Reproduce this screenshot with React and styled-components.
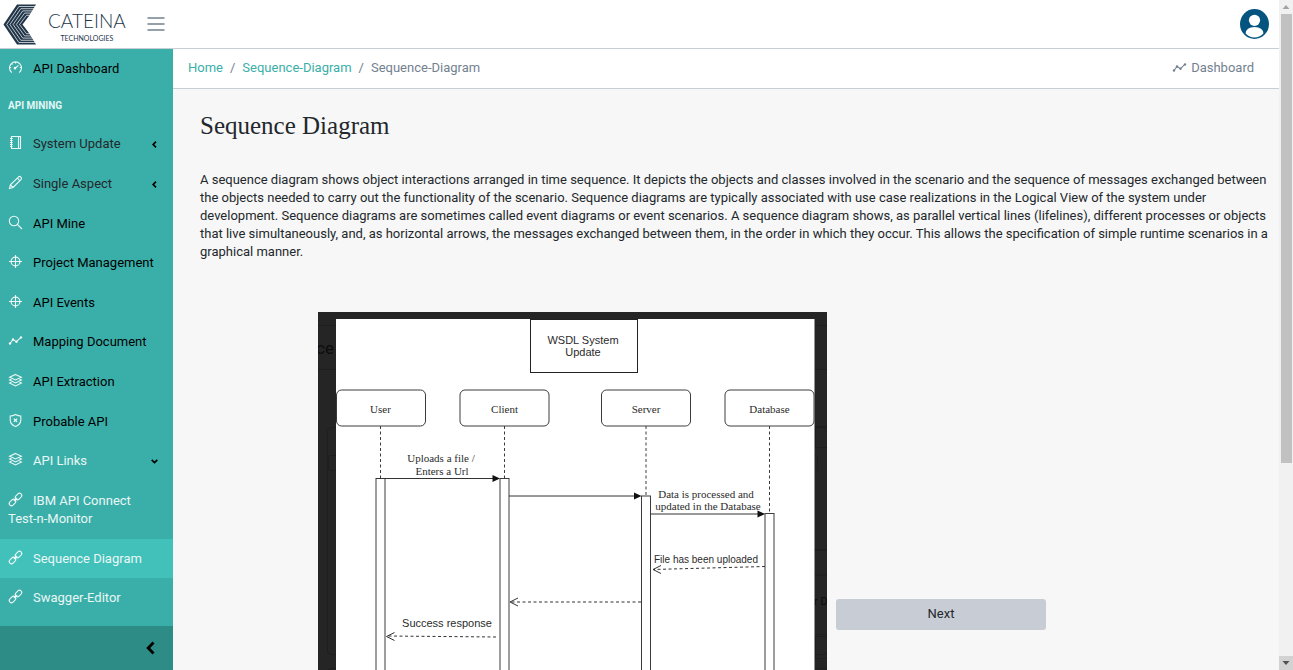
import React from "react";
import styled, { createGlobalStyle } from "styled-components";

const teal = "#3aafa9";
const line = "#c8ced3";
const muted = "#73818f";
const ink = "#23282c";

const GlobalStyle = createGlobalStyle`
  *, *::before, *::after { box-sizing: border-box; }
  html, body, #root { height: 100%; }
  body {
    margin: 0;
    overflow: hidden;
    background: #f7f7f7;
    color: ${ink};
    font-family: Roboto, "Liberation Sans", sans-serif;
    font-size: 13px;
    line-height: 18px;
  }
  a { text-decoration: none; }
  button { font: inherit; border: 0; cursor: pointer; }
`;

const Window = styled.div`
  display: flex;
  height: 100vh;
`;

const Page = styled.div`
  flex: 1;
  min-width: 0;
  display: flex;
  flex-direction: column;
`;

const Header = styled.header`
  flex: none;
  display: flex;
  align-items: center;
  height: 49px;
  padding: 0 10px 0 3px;
  background: #fff;
  border-bottom: 1px solid ${line};
`;

const Brand = styled.a`
  display: flex;
  align-items: center;
  gap: 11px;
  color: #22364a;
`;

const BrandText = styled.span`
  display: flex;
  flex-direction: column;
  align-items: center;
  font-family: Lato, sans-serif;
  padding-top: 8px;
`;

const BrandName = styled.span`
  font-size: 19px;
  font-weight: 300;
  line-height: 20px;
`;

const BrandSub = styled.span`
  font-size: 7px;
  line-height: 14px;
`;

const MenuButton = styled.button`
  display: flex;
  margin-left: 21px;
  margin-right: auto;
  padding: 0;
  background: none;
  color: ${muted};
`;

const AvatarButton = styled.button`
  display: flex;
  padding: 0;
  background: none;
`;

const Body = styled.div`
  flex: 1;
  min-height: 0;
  display: flex;
`;

const Sidebar = styled.aside`
  flex: none;
  width: 173px;
  display: flex;
  flex-direction: column;
  background: ${teal};
`;

const NavList = styled.ul`
  flex: 1;
  min-height: 0;
  display: flex;
  flex-direction: column;
  margin: 0;
  padding: 0 0 8px;
  list-style: none;
`;

const NavTitle = styled.li`
  flex: none;
  height: 36px;
  padding: 8px;
  color: #e4f6f5;
  font-size: 10px;
  font-weight: 700;
`;

const NavItem = styled.li`
  flex: 1 0 auto;
  display: flex;
`;

const NavLink = styled.a`
  flex: 1;
  display: flex;
  align-items: center;
  padding: 10px 15px 10px 8px;
  color: ${(p) => (p.$tone === "light" ? "#e9f7f6" : p.$tone === "soft" ? ink : "#000")};
  background: ${(p) => (p.$active ? "#42c1ba" : "transparent")};
`;

const NavLabel = styled.span`
  flex: 1;
  svg {
    margin: 0 10px 0 0;
    vertical-align: -2px;
    color: rgba(255, 255, 255, 0.9);
  }
`;

const Minimizer = styled.button`
  flex: none;
  display: flex;
  align-items: center;
  justify-content: flex-end;
  height: 44px;
  padding: 0 18px;
  background: #2e8c87;
  color: #000;
`;

const Main = styled.main`
  flex: 1;
  min-width: 0;
  overflow: hidden;
`;

const CrumbBar = styled.div`
  display: flex;
  align-items: center;
  justify-content: space-between;
  height: 40px;
  padding: 0 25px 2px 15px;
  background: #fff;
  border-bottom: 1px solid ${line};
`;

const Crumbs = styled.ol`
  display: flex;
  gap: 7px;
  margin: 0;
  padding: 0;
  list-style: none;
  color: ${muted};
  a { color: ${teal}; }
  li + li::before { content: "/"; padding-right: 7px; }
`;

const CrumbAction = styled.a`
  display: flex;
  align-items: center;
  gap: 4px;
  color: ${muted};
`;

const Content = styled.section`
  padding: 21px 8px 0 27px;
`;

const Title = styled.h1`
  margin: 0;
  font-family: "Liberation Serif", serif;
  font-size: 25px;
  font-weight: 400;
  line-height: 32px;
`;

const Lead = styled.p`
  margin: 29px 0 0;
`;

const Exhibit = styled.div`
  display: flex;
  align-items: flex-start;
  gap: 9px;
  margin: 51px 0 0 118px;
`;

const DiagramArt = styled.svg`
  display: block;
  flex: none;
`;

const NextButton = styled.button`
  width: 210px;
  height: 31px;
  margin-top: 287px;
  padding: 0 0 2px;
  border-radius: 3px;
  background: #c8ccd4;
  color: ${ink};
`;

const ScrollTrack = styled.div`
  flex: none;
  width: 14px;
  display: flex;
  flex-direction: column;
  background: #f1f1f1;
`;

const ScrollStep = styled.button`
  flex: none;
  display: flex;
  height: 14px;
  padding: 0;
  background: ${(p) => (p.$enabled ? "#d2d2d2" : "transparent")};
  color: ${(p) => (p.$enabled ? "#505050" : "#a3a3a3")};
`;

const ScrollLane = styled.div`
  flex: 1;
  padding: 0 1px 0 2px;
`;

const ScrollThumb = styled.div`
  height: 70%;
  background: #c1c1c1;
`;

const Glyph = ({ children }) => (
  <svg width="15" height="15" viewBox="0 0 15 15" fill="none" stroke="currentColor" strokeWidth="1.1" aria-hidden="true">
    {children}
  </svg>
);

const Gauge = () => (
  <Glyph>
    <path d="M3.8 12.6A6 6 0 1 1 11.2 12.6" />
    <path d="M7 8.4 10.4 5.4M7.5 2v1.4M2 7.5h1.2M11.8 7.5H13M3.6 3.9l.8.8" />
    <circle cx="7" cy="8.2" r=".8" fill="currentColor" />
  </Glyph>
);
const Notebook = () => (
  <Glyph>
    <path d="M3.5 1.5h9v12h-9zM10.5 1.5v12" />
    <path d="M2 3.5h2.6M2 5.5h2.6M2 7.5h2.6M2 9.5h2.6M2 11.5h2.6" />
  </Glyph>
);
const Pencil = () => (
  <Glyph>
    <path d="M1.5 13.5 2.4 9.9 10.6 1.8Q11.6 1 12.6 2L13 2.4Q14 3.4 13.2 4.4L5 12.5ZM9.4 3.2l2.6 2.6M2.4 9.9 5 12.5" />
  </Glyph>
);
const Magnifier = () => (
  <Glyph>
    <circle cx="6" cy="6" r="4.7" />
    <path d="M9.4 9.4 14 14" />
  </Glyph>
);
const Target = () => (
  <Glyph>
    <circle cx="7.5" cy="7.5" r="4.4" />
    <path d="M7.5 1v13M1 7.5h13" />
  </Glyph>
);
const Graph = () => (
  <Glyph>
    <path d="M2 10.5 5 6.5 8.4 8.6 13 4.4" />
    <g fill="currentColor" stroke="none">
      <circle cx="2" cy="10.5" r="1.2" />
      <circle cx="5" cy="6.5" r="1.2" />
      <circle cx="8.5" cy="8.7" r="1.2" />
      <circle cx="13" cy="4.4" r="1.2" />
    </g>
  </Glyph>
);
const Layers = () => (
  <Glyph>
    <path d="M7.5 1.4 13.4 4.2 7.5 7 1.6 4.2Z" />
    <path d="M3.4 6.2 1.6 7.1 7.5 9.9 13.4 7.1 11.6 6.2" />
    <path d="M3.4 9.2 1.6 10.1 7.5 13 13.4 10.1 11.6 9.2" />
  </Glyph>
);
const Shield = () => (
  <Glyph>
    <path d="M7.5 1.5Q10 3 12.8 3V7.4Q12.4 11.6 7.5 13.6 2.6 11.6 2.2 7.4V3Q5 3 7.5 1.5Z" />
    <path d="M5.9 5.6 9.1 8.8M9.1 5.6 5.9 8.8" strokeWidth="1.3" />
  </Glyph>
);
const Chain = () => (
  <Glyph>
    <rect x="-3.6" y="-2.2" width="7.2" height="4.400" rx="2.200" transform="translate(10.5 4.5) rotate(-45)" />
    <rect x="-3.6" y="-2.2" width="7.2" height="4.400" rx="2.200" transform="translate(4.5 10.5) rotate(-45)" />
    <path d="M5.8 9.2 9.2 5.8" />
  </Glyph>
);

const Caret = ({ open }) => (
  <svg width="7" height="7" viewBox="0 0 7 7" fill="none" stroke="#000" strokeWidth="1.700" aria-hidden="true">
    <path d={open ? "M.7 1.8 3.5 4.6 6.3 1.8" : "M5 .7 2.2 3.5 5 6.3"} />
  </svg>
);

const stripes = [1, 2, 3, 4, 5];

const Logo = () => (
  <svg width="34" height="41" viewBox="0 0 34 41" aria-hidden="true">
    <path d="M14 .5H33L26 12 19.5 20.5 26 29 33 40.5H14L.5 20.5Z" fill="#22364a" />
    <g fill="none" stroke="#fff" strokeWidth=".7">
      {stripes.map((i) => (
        <path key={i} d={`M34 ${i * 2.2 + 0.3}H${14 + i * 1.9}L${0.5 + i * 3.2} 20.5 ${14 + i * 1.9} ${40.7 - i * 2.2}H34`} />
      ))}
    </g>
  </svg>
);

const Avatar = () => (
  <svg width="29" height="30" viewBox="0 0 29 30" aria-hidden="true">
    <ellipse cx="14.5" cy="15" rx="14.5" ry="15" fill="#05547f" />
    <circle cx="14.5" cy="11.3" r="5.6" fill="#fff" />
    <path d="M5.6 24.6Q6 18 14.5 18T23.4 24.6Q19.6 28.5 14.5 28.5T5.6 24.6Z" fill="#fff" />
  </svg>
);

const links = [
  { label: "System Update", Icon: Notebook, tone: "soft", caret: "closed" },
  { label: "Single Aspect", Icon: Pencil, tone: "soft", caret: "closed" },
  { label: "API Mine", Icon: Magnifier },
  { label: "Project Management", Icon: Target },
  { label: "API Events", Icon: Target },
  { label: "Mapping Document", Icon: Graph },
  { label: "API Extraction", Icon: Layers },
  { label: "Probable API", Icon: Shield },
  { label: "API Links", Icon: Layers, tone: "light", caret: "open" },
  { label: "IBM API Connect Test-n-Monitor", Icon: Chain, tone: "light" },
  { label: "Sequence Diagram", Icon: Chain, tone: "light", active: true },
  { label: "Swagger-Editor", Icon: Chain, tone: "light" },
];

const SideLink = ({ label, Icon, tone, caret, active }) => (
  <NavItem>
    <NavLink href="#" $tone={tone} $active={active}>
      <NavLabel>
        <Icon />
        {label}
      </NavLabel>
      {caret && <Caret open={caret === "open"} />}
    </NavLink>
  </NavItem>
);

const actors = [
  { name: "User", x: 18.5, life: 62.5, start: 166.5 },
  { name: "Client", x: 142, life: 186.5, start: 166.5 },
  { name: "Server", x: 283.5, life: 328, start: 184 },
  { name: "Database", x: 407, life: 451.5, start: 201.5 },
];

const Diagram = () => (
  <DiagramArt width="509" height="620" viewBox="0 0 509 620" role="img" aria-label="WSDL System Update sequence diagram">
    <rect width="509" height="620" fill="#252525" />
    <g fill="none" stroke="#1e1e1e">
      <path d="M0 13.5H509M0 57.5H509" />
      <rect x="9.5" y="115.5" width="500" height="227" rx="4" />
      <rect x="10.5" y="143.5" width="489" height="15" rx="2" />
      <rect x="497.5" y="114.5" width="20" height="21" />
      <path d="M496 263H509M496 322.5H509" />
      <rect x="497.5" y="324.5" width="20" height="22" />
      <rect x="9.5" y="356.5" width="500" height="250" rx="4" />
      <path d="M496 238h13" strokeWidth="2" />
    </g>
    <g fill="#0c0c0c" fontFamily="Roboto, sans-serif">
      <text x="-2" y="42" fontSize="17">ce</text>
      <text x="496" y="293" fontSize="11">r D</text>
    </g>
    <rect x="18" y="7" width="478.5" height="613" fill="#fff" />
    <g fill="#fff" stroke="#3c3c3c">
      <rect x="212.5" y="7.5" width="107" height="53" stroke="#222" />
      {actors.map((a) => (
        <g key={a.name}>
          <path d={`M${a.life} 114V${a.start}`} strokeDasharray="3 2.5" />
          <rect x={a.x} y="78" width="89" height="36" rx="5" />
          <rect x={a.life - 4.5} y={a.start} width="9" height="500" />
        </g>
      ))}
    </g>
    <g fill="none" stroke="#333">
      <path d="M58 166.5H177M191 184H319M332.5 202H442" />
      <path d="M447 254.5 335 257.5M323 290H192M178 325 69 324" strokeDasharray="3 2.5" />
      <path d="M343 253.5 335 257.5 343 261.5M200 286 192 290 200 294M76.5 320.5 68.5 324.5 76.5 328.5" />
    </g>
    <g fill="#111">
      <path d="M174.500 163 182 166.500 174.500 170ZM316 180.500 323.500 184 316 187.500ZM439.500 198.500 447 202 439.500 205.500Z" />
    </g>
    <g fill="#2b2b2b" fontSize="11" textAnchor="middle">
      <g fontFamily="'Liberation Sans', sans-serif">
        <text x="265" y="32">WSDL System</text>
        <text x="265" y="44">Update</text>
        <text x="129" y="315">Success response</text>
        <text x="388" y="251" fontSize="10">File has been uploaded</text>
      </g>
      <g fontFamily="'Liberation Serif', serif">
        {actors.map((a) => (
          <text key={a.name} x={a.life} y="101">{a.name}</text>
        ))}
        <text x="123" y="150">Uploads a file /</text>
        <text x="124" y="163">Enters a Url</text>
        <text x="388" y="186">Data is processed and</text>
        <text x="390" y="198">updated in the Database</text>
      </g>
    </g>
  </DiagramArt>
);

const StepArrow = ({ down }) => (
  <svg width="14" height="14" viewBox="0 0 14 14" fill="currentColor" aria-hidden="true">
    <path d={down ? "M3.5 5H10.5L7 9Z" : "M3.5 9H10.5L7 5Z"} />
  </svg>
);

export default function App() {
  return (
    <Window>
      <GlobalStyle />
      <Page>
        <Header>
          <Brand href="#">
            <Logo />
            <BrandText>
              <BrandName>CATEINA</BrandName>
              <BrandSub>TECHNOLOGIES</BrandSub>
            </BrandText>
          </Brand>
          <MenuButton aria-label="Toggle sidebar">
            <svg width="18" height="14" viewBox="0 0 18 14" stroke="currentColor" strokeWidth="1.4" aria-hidden="true">
              <path d="M.5 1H17.5M.5 7H17.5M.5 13H17.5" />
            </svg>
          </MenuButton>
          <AvatarButton aria-label="Account">
            <Avatar />
          </AvatarButton>
        </Header>
        <Body>
          <Sidebar>
            <NavList>
              <SideLink label="API Dashboard" Icon={Gauge} />
              <NavTitle>API MINING</NavTitle>
              {links.map((l) => (
                <SideLink key={l.label} {...l} />
              ))}
            </NavList>
            <Minimizer aria-label="Minimize sidebar">
              <svg width="9" height="14" viewBox="0 0 9 14" fill="none" stroke="currentColor" strokeWidth="2.8" aria-hidden="true">
                <path d="M7.5 1.5 2.2 7 7.5 12.5" />
              </svg>
            </Minimizer>
          </Sidebar>
          <Main>
            <CrumbBar>
              <Crumbs>
                <li><a href="#">Home</a></li>
                <li><a href="#">Sequence-Diagram</a></li>
                <li>Sequence-Diagram</li>
              </Crumbs>
              <CrumbAction href="#">
                <Graph />
                Dashboard
              </CrumbAction>
            </CrumbBar>
            <Content>
              <Title>Sequence Diagram</Title>
              <Lead>
                A sequence diagram shows object interactions arranged in time sequence. It depicts the objects and
                classes involved in the scenario and the sequence of messages exchanged between the objects needed to
                carry out the functionality of the scenario. Sequence diagrams are typically associated with use case
                realizations in the Logical View of the system under development. Sequence diagrams are sometimes
                called event diagrams or event scenarios. A sequence diagram shows, as parallel vertical lines
                (lifelines), different processes or objects that live simultaneously, and, as horizontal arrows, the
                messages exchanged between them, in the order in which they occur. This allows the specification of
                simple runtime scenarios in a graphical manner.
              </Lead>
              <Exhibit>
                <Diagram />
                <NextButton>Next</NextButton>
              </Exhibit>
            </Content>
          </Main>
        </Body>
      </Page>
      <ScrollTrack>
        <ScrollStep aria-label="Scroll up">
          <StepArrow />
        </ScrollStep>
        <ScrollLane>
          <ScrollThumb />
        </ScrollLane>
        <ScrollStep $enabled aria-label="Scroll down">
          <StepArrow down />
        </ScrollStep>
      </ScrollTrack>
    </Window>
  );
}
